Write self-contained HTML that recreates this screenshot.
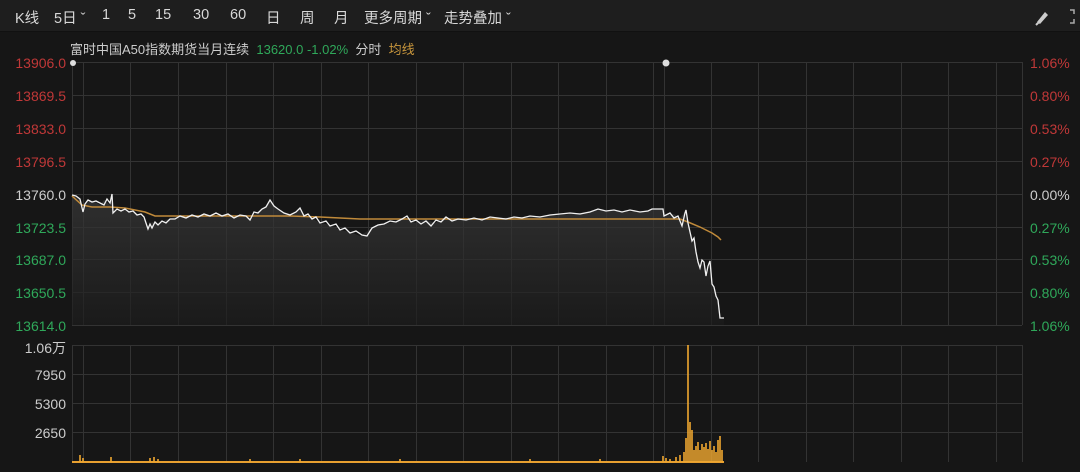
<!DOCTYPE html>
<html><head><meta charset="utf-8"><style>
body{margin:0;width:1080px;height:472px;background:#161616;overflow:hidden;font-family:"Liberation Sans","Noto Sans CJK SC",sans-serif;position:relative}
.top{position:absolute;left:0;top:0;width:1080px;height:31px;background:#1e1e1e;border-bottom:1px solid #111}
.t{position:absolute;font-size:14.5px;color:#d8d8d8;white-space:nowrap}
.l{position:absolute;font-size:14px;text-align:right;width:66px;left:0}
.r{position:absolute;font-size:14px;left:1030px}
</style></head><body>
<div class="top"></div>
<div class="t" style="left:15px;top:7px">K线</div>
<div class="t" style="left:54px;top:7px">5日 ˇ</div>
<div class="t" style="left:102px;top:7px">1</div>
<div class="t" style="left:128px;top:7px">5</div>
<div class="t" style="left:155px;top:7px">15</div>
<div class="t" style="left:193px;top:7px">30</div>
<div class="t" style="left:230px;top:7px">60</div>
<div class="t" style="left:266px;top:7px">日</div>
<div class="t" style="left:300px;top:7px">周</div>
<div class="t" style="left:334px;top:7px">月</div>
<div class="t" style="left:364px;top:7px">更多周期 ˇ</div>
<div class="t" style="left:444px;top:7px">走势叠加 ˇ</div>
<svg style="position:absolute;left:1034px;top:8px" width="46" height="18"><path d="M3 14 L11 4 L14 7 L6 16Z" fill="#ccc"/><path d="M2 17 L5 14" stroke="#ccc" stroke-width="2"/><path d="M36 2h4v4 M36 15h4v-4" stroke="#aaa" fill="none" stroke-width="1.5"/></svg>
<div class="t" style="left:70px;top:39px;font-size:13px;color:#ccc">富时中国A50指数期货当月连续 <span style="color:#2fa85a">&nbsp;13620.0 -1.02%</span> &nbsp;分时 &nbsp;<span style="color:#c8963c">均线</span></div>
<div class="l" style="top:55px;color:#c03838">13906.0</div>
<div class="l" style="top:88px;color:#c03838">13869.5</div>
<div class="l" style="top:121px;color:#c03838">13833.0</div>
<div class="l" style="top:154px;color:#c03838">13796.5</div>
<div class="l" style="top:187px;color:#ccc">13760.0</div>
<div class="l" style="top:220px;color:#2fa85a">13723.5</div>
<div class="l" style="top:252px;color:#2fa85a">13687.0</div>
<div class="l" style="top:285px;color:#2fa85a">13650.5</div>
<div class="l" style="top:318px;color:#2fa85a">13614.0</div>
<div class="r" style="top:55px;color:#c03838">1.06%</div>
<div class="r" style="top:88px;color:#c03838">0.80%</div>
<div class="r" style="top:121px;color:#c03838">0.53%</div>
<div class="r" style="top:154px;color:#c03838">0.27%</div>
<div class="r" style="top:187px;color:#ccc">0.00%</div>
<div class="r" style="top:220px;color:#2fa85a">0.27%</div>
<div class="r" style="top:252px;color:#2fa85a">0.53%</div>
<div class="r" style="top:285px;color:#2fa85a">0.80%</div>
<div class="r" style="top:318px;color:#2fa85a">1.06%</div>
<div class="l" style="top:338px;color:#ccc">1.06万</div>
<div class="l" style="top:367px;color:#ccc">7950</div>
<div class="l" style="top:396px;color:#ccc">5300</div>
<div class="l" style="top:425px;color:#ccc">2650</div>
<svg style="position:absolute;left:0;top:0" width="1080" height="472">
<defs><linearGradient id="g" x1="0" y1="0" x2="0" y2="1"><stop offset="0" stop-color="#3a3a3a"/><stop offset="1" stop-color="#1c1c1c"/></linearGradient></defs>
<g stroke="#333" stroke-width="1">
<path d="M72 62.5H1022 M72 95.5H1022 M72 128.5H1022 M72 161.5H1022 M72 194.5H1022 M72 227.5H1022 M72 259.5H1022 M72 292.5H1022 M72 325.5H1022"/>
<path d="M72 345.5H1022 M72 374.5H1022 M72 403.5H1022 M72 432.5H1022"/>
<path d="M72.5 62V325 M83.5 62V325 M130.5 62V325 M178.5 62V325 M226.5 62V325 M273.5 62V325 M321.5 62V325 M368.5 62V325 M416.5 62V325 M463.5 62V325 M511.5 62V325 M558.5 62V325 M606.5 62V325 M653.5 62V325 M664.5 62V325 M711.5 62V325 M758.5 62V325 M806.5 62V325 M853.5 62V325 M901.5 62V325 M948.5 62V325 M996.5 62V325 M1022.5 62V325"/>
<path d="M72.5 345V462 M83.5 345V462 M130.5 345V462 M178.5 345V462 M226.5 345V462 M273.5 345V462 M321.5 345V462 M368.5 345V462 M416.5 345V462 M463.5 345V462 M511.5 345V462 M558.5 345V462 M606.5 345V462 M653.5 345V462 M664.5 345V462 M711.5 345V462 M758.5 345V462 M806.5 345V462 M853.5 345V462 M901.5 345V462 M948.5 345V462 M996.5 345V462 M1022.5 345V462"/>
</g>
<path d="M72 195 L80 198 L83 212 L86 201 L95 202 L100 205 L104 200 L110 205 L112 194 L113 212 L120 210 L125 209 L132 212 L140 215 L145 221 L148 228 L152 222 L160 224 L165 220 L175 217 L190 216 L205 215 L215 217 L225 214 L235 215 L245 216 L250 218 L255 213 L262 209 L270 202 L275 207 L282 212 L290 214 L300 210 L305 215 L315 220 L320 223 L330 225 L340 230 L350 232 L360 236 L366 232 L375 226 L390 223 L405 218 L415 223 L425 219 L435 223 L445 218 L460 219 L480 218 L500 218 L520 217 L540 216 L560 215 L580 213 L595 210 L610 211 L625 211 L640 212 L652 209 L663 209 L664 215 L674 214 L680 218 L685 212 L688 226 L693 238 L697 252 L700 268 L704 262 L707 276 L710 262 L713 286 L717 295 L720 316 L724 320 L724 325 L72 325Z" fill="url(#g)" opacity="0.7"/>
<path d="M72 196 L82 205 L92 207 L110 207 L125 208 L145 212 L155 216 L175 216 L250 216 L290 216 L320 217 L360 219 L400 219 L500 219 L600 219 L664 219 L680 219 L688 222 L700 227 L712 233 L718 237 L721 240" fill="none" stroke="#c08a3a" stroke-width="1.5"/>
<path d="M72 195 L76 196 L80 199 L83 212 L85 204 L88 200 L92 202 L96 201 L100 203 L104 205 L107 199 L110 203 L112 194 L113 213 L117 209 L121 211 L125 209 L129 212 L133 211 L137 215 L141 214 L144 217 L146 223 L148 229 L150 224 L152 228 L155 222 L158 225 L162 221 L166 223 L170 219 L175 219 L180 216 L186 218 L192 215 L198 217 L204 214 L210 216 L216 213 L222 216 L228 214 L234 218 L240 215 L246 216 L250 220 L254 212 L258 213 L262 209 L266 207 L270 200 L274 206 L278 209 L284 213 L290 215 L296 212 L300 208 L304 216 L308 214 L312 219 L316 217 L320 223 L326 221 L330 226 L336 224 L340 230 L345 228 L350 233 L356 231 L362 235 L367 236 L372 228 L378 225 L384 224 L390 221 L396 222 L402 219 L407 216 L411 222 L416 220 L421 224 L426 221 L431 226 L436 220 L441 222 L446 217 L452 221 L458 219 L466 220 L474 218 L482 220 L490 217 L498 218 L506 219 L514 217 L522 218 L530 216 L540 217 L550 215 L560 214 L570 213 L580 214 L590 212 L598 209 L606 211 L614 210 L622 212 L630 210 L640 212 L648 211 L652 209 L663 209 L664 216 L670 213 L674 218 L678 216 L682 226 L685 213 L686 210 L688 223 L690 232 L692 241 L694 238 L696 252 L698 262 L700 268 L702 260 L704 262 L706 276 L708 266 L710 261 L712 284 L714 287 L716 296 L718 300 L720 318 L724 318" fill="none" stroke="#f0f0f0" stroke-width="1.3"/>
<circle cx="73" cy="63" r="3" fill="#ddd"/><circle cx="666" cy="63" r="3.5" fill="#ddd"/>
<path d="M72 462H724" stroke="#e8a030" stroke-width="2"/>
<g stroke="#f0a830" stroke-width="1.6">
<path d="M80 462V455 M83 462V458 M111 462V457 M150 462V458 M154 462V457 M158 462V459 M250 462V459 M300 462V459 M400 462V459 M530 462V459 M600 462V459"/>
<path d="M663 462V456 M666 462V458 M670 462V459 M676 462V457 M680 462V455 M684 462V452 M686 462V438 M688 462V345 M690 462V422 M692 462V430 M694 462V450 M696 462V446 M698 462V442 M700 462V450 M702 462V444 M704 462V447 M706 462V443 M708 462V449 M710 462V441 M712 462V450 M714 462V446 M716 462V452 M718 462V440 M720 462V436 M722 462V450"/>
</g>
</svg>
</body></html>
